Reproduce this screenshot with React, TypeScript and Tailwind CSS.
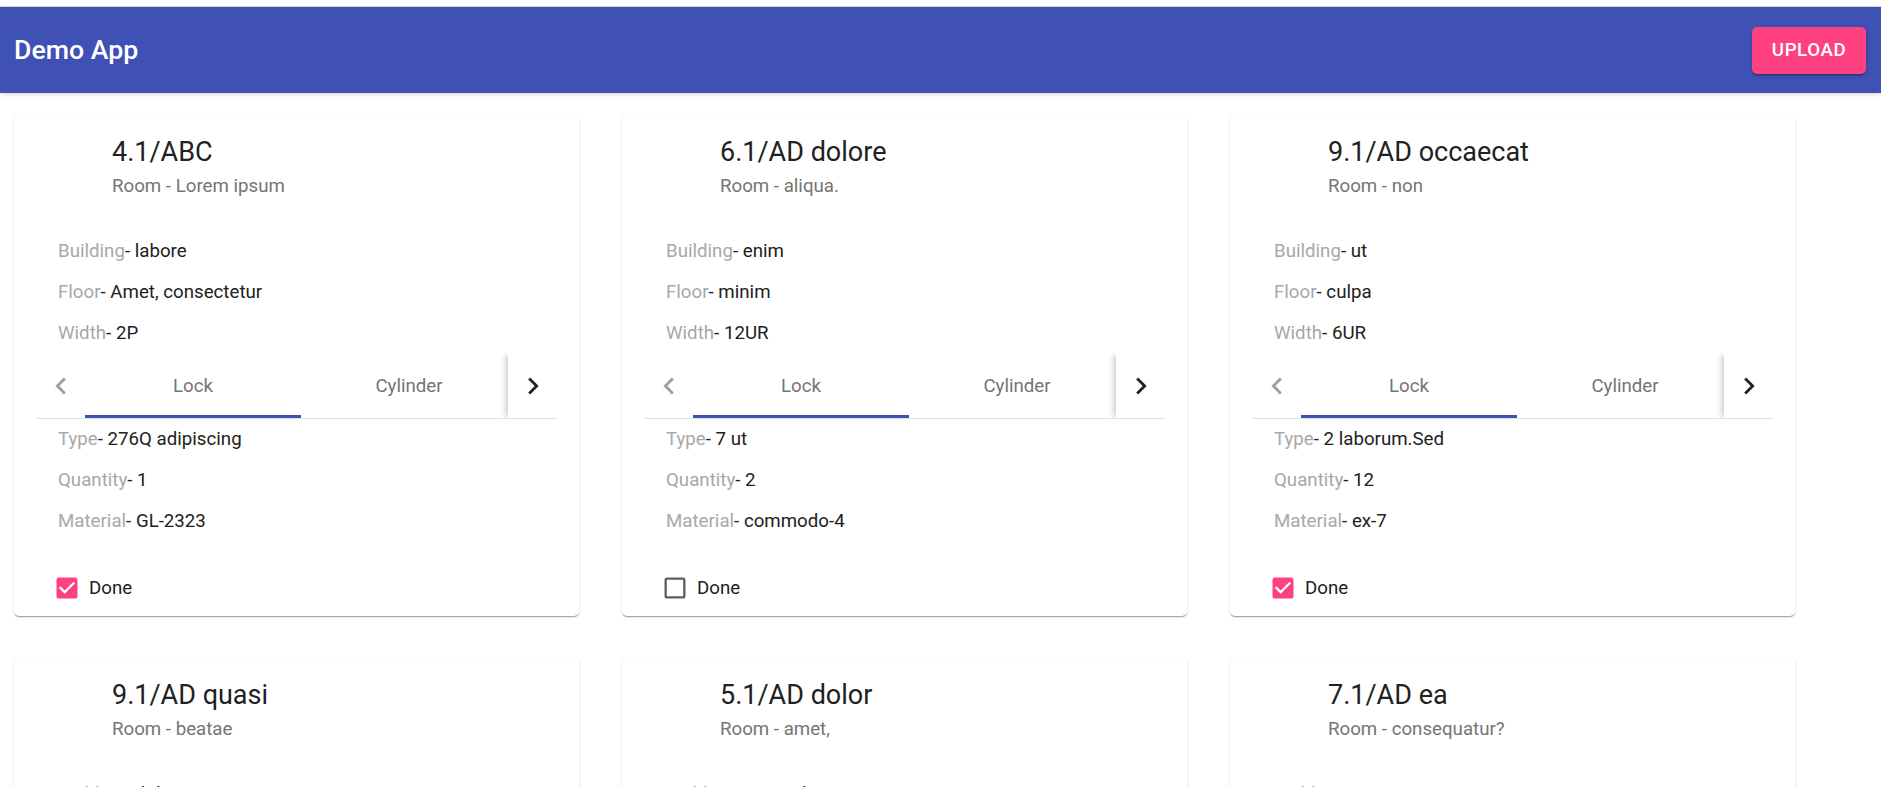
import { useState } from 'react'

type Item = {
  title: string
  room: string
  building: string
  floor: string
  width: string
  type: string
  quantity: string
  material: string
  done: boolean
}

const items: Item[] = [
  { title: '4.1/ABC', room: 'Lorem ipsum', building: 'labore', floor: 'Amet, consectetur', width: '2P', type: '276Q adipiscing', quantity: '1', material: 'GL-2323', done: true },
  { title: '6.1/AD dolore', room: 'aliqua.', building: 'enim', floor: 'minim', width: '12UR', type: '7 ut', quantity: '2', material: 'commodo-4', done: false },
  { title: '9.1/AD occaecat', room: 'non', building: 'ut', floor: 'culpa', width: '6UR', type: '2 laborum.Sed', quantity: '12', material: 'ex-7', done: true },
  { title: '9.1/AD quasi', room: 'beatae', building: 'dolor', floor: 'sit amet', width: '4P', type: '12 quis', quantity: '3', material: 'GL-118', done: false },
  { title: '5.1/AD dolor', room: 'amet,', building: 'nostrud', floor: 'tempor', width: '8UR', type: '5 magna', quantity: '6', material: 'irure-2', done: true },
  { title: '7.1/AD ea', room: 'consequatur?', building: 'veniam', floor: 'eiusmod', width: '10P', type: '3 aute', quantity: '4', material: 'ex-9', done: false },
]

function Chevron({ dir, className }: { dir: 'left' | 'right'; className?: string }) {
  const d =
    dir === 'left'
      ? 'M15.41 16.59L10.83 12l4.58-4.59L14 6l-6 6 6 6 1.41-1.41z'
      : 'M8.59 16.59L13.17 12 8.59 7.41 10 6l6 6-6 6-1.41-1.41z'
  return (
    <svg viewBox="0 0 24 24" className={className} fill="currentColor">
      <path d={d} />
    </svg>
  )
}

function Row({ label, value }: { label: string; value: string }) {
  return (
    <div className="h-[41px] flex items-center px-[44px] text-[18.7px]">
      <span className="text-[#a8a8a8]">{label}</span>
      <span className="text-[#212121]">- {value}</span>
    </div>
  )
}

function DoneBox({ initial }: { initial: boolean }) {
  const [checked, setChecked] = useState(initial)
  return (
    <button onClick={() => setChecked(!checked)} className="flex items-center gap-[8px] cursor-pointer">
      {checked ? (
        <svg viewBox="0 0 24 24" className="w-[28px] h-[28px] text-[#ff4081]" fill="currentColor">
          <path d="M19 3H5c-1.11 0-2 .9-2 2v14c0 1.1.89 2 2 2h14c1.11 0 2-.9 2-2V5c0-1.1-.89-2-2-2zm-9 14l-5-5 1.41-1.41L10 14.17l7.59-7.59L19 8l-9 9z" />
        </svg>
      ) : (
        <svg viewBox="0 0 24 24" className="w-[28px] h-[28px] text-[#5f5f5f]" fill="currentColor">
          <path d="M19 5v14H5V5h14m0-2H5c-1.1 0-2 .9-2 2v14c0 1.1.9 2 2 2h14c1.1 0 2-.9 2-2V5c0-1.1-.9-2-2-2z" />
        </svg>
      )}
      <span className="text-[18.7px] text-[#212121]">Done</span>
    </button>
  )
}

function ItemCard({ item }: { item: Item }) {
  const [tab, setTab] = useState(0)
  return (
    <div className="bg-white rounded-[5px] shadow-[0_2px_1px_-1px_rgba(0,0,0,0.2),0_1px_1px_0_rgba(0,0,0,0.14),0_1px_3px_0_rgba(0,0,0,0.12)]">
      {/* header */}
      <div className="pt-[21px] pl-[98px]">
        <div className="text-[27px] leading-[32px] text-[#212121]">{item.title}</div>
        <div className="text-[18.7px] leading-[36px] text-[#757575]">Room - {item.room}</div>
      </div>

      <div className="pt-[27px]">
        <Row label="Building" value={item.building} />
        <Row label="Floor" value={item.floor} />
        <Row label="Width" value={item.width} />
      </div>

      {/* tabs */}
      <div className="mx-[22px] border-b border-[#e0e0e0]">
        <div className="flex h-[64px] overflow-hidden">
          <div className="w-[49px] shrink-0 flex items-center justify-center text-[#9e9e9e]">
            <Chevron dir="left" className="w-[34px] h-[34px]" />
          </div>
          <div className="flex-1 flex overflow-hidden">
            {['Lock', 'Cylinder'].map((t, i) => (
              <button
                key={t}
                onClick={() => setTab(i)}
                className="relative h-full w-[216px] shrink-0 flex items-center justify-center text-[18.7px] text-[#757575]"
              >
                {t}
                {tab === i && <span className="absolute left-0 right-0 bottom-0 h-[3px] bg-[#3f51b5]" />}
              </button>
            ))}
          </div>
          <div className="w-[49px] shrink-0 flex items-center justify-center bg-white text-[#212121] shadow-[-3px_0_6px_-1px_rgba(0,0,0,0.22)]">
            <Chevron dir="right" className="w-[34px] h-[34px]" />
          </div>
        </div>
      </div>

      <div>
        <Row label="Type" value={item.type} />
        <Row label="Quantity" value={item.quantity} />
        <Row label="Material" value={item.material} />
      </div>

      <div className="h-[50px] mt-[21px] mb-[3px] flex items-center pl-[39px]">
        <DoneBox initial={item.done} />
      </div>
    </div>
  )
}

export default function App() {
  return (
    <div className="min-h-screen bg-white font-['Roboto',sans-serif]">
      <div className="h-[7px] border-b border-[#d6d6d6] bg-white" />
      <header className="h-[86px] bg-[#3f51b5] flex items-center justify-between pl-[14px] pr-[15px] shadow-[0_2px_4px_-1px_rgba(0,0,0,0.2)]">
        <h1 className="text-[26.7px] font-medium text-white">Demo App</h1>
        <button className="w-[114px] h-[47px] rounded-[5px] bg-[#ff4081] text-white text-[18.7px] font-medium tracking-[0.03em] shadow-[0_3px_1px_-2px_rgba(0,0,0,0.2),0_2px_2px_0_rgba(0,0,0,0.14),0_1px_5px_0_rgba(0,0,0,0.12)]">
          UPLOAD
        </button>
      </header>

      <main className="pt-[22px] pl-[14px] pb-[40px]">
        <div className="grid grid-cols-[repeat(3,565px)] gap-x-[43px] gap-y-[42px]">
          {items.map((item) => (
            <ItemCard key={item.title + item.room} item={item} />
          ))}
        </div>
      </main>
    </div>
  )
}
